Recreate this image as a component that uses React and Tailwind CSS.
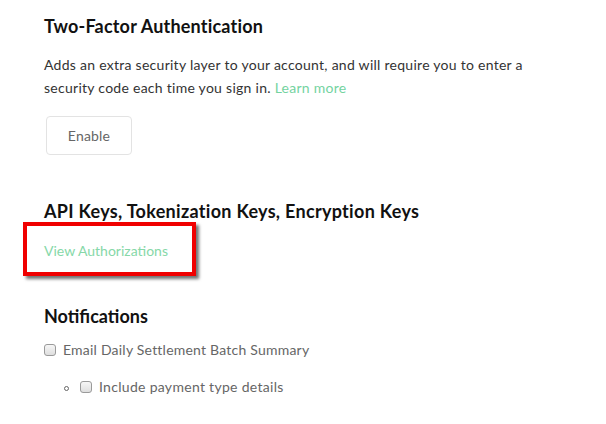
import React from "react";

function Checkbox() {
  return (
    <span className="inline-block w-[12px] h-[12px] rounded-[3px] border border-[#9a9a9a] bg-gradient-to-b from-[#f6f6f6] to-[#dedede] shrink-0" />
  );
}

export default function App() {
  return (
    <div
      className="relative w-[606px] h-[424px] bg-white overflow-hidden pl-[44px] pt-[14px] flex flex-col items-start"
      style={{ fontFamily: "Lato, 'Open Sans', sans-serif" }}
    >
      <h2 className="text-[18px] leading-[24px] font-bold text-[#111] tracking-[0.2px]">Two-Factor Authentication</h2>
      <p className="mt-[15px] text-[14px] leading-[23px] text-[#333] w-[520px] tracking-[0.27px]">
        Adds an extra security layer to your account, and will require you to enter a security code each time you sign in.{" "}
        <span className="text-[#74d39f]">Learn more</span>
      </p>
      <button className="mt-[17px] ml-[2px] w-[86px] h-[39px] rounded-[4px] border border-[#e3e3e3] bg-white text-[14px] text-[#666] tracking-[0.2px] flex items-center justify-center">
        Enable
      </button>

      <h2 className="mt-[44px] text-[18px] leading-[24px] font-bold text-[#111] tracking-[0.3px]">
        API Keys, Tokenization Keys, Encryption Keys
      </h2>
      <div className="relative mt-[15px]">
        <span className="text-[14px] leading-[23px] text-[#86d8a8]">View Authorizations</span>
        <div className="absolute left-[-21px] top-[-16px] w-[173px] h-[54px] border-[4px] border-[#f00000] shadow-[3px_3px_3px_rgba(0,0,0,0.55)] pointer-events-none" />
      </div>

      <h2 className="mt-[42px] text-[18px] leading-[24px] font-bold text-[#111]">Notifications</h2>
      <div className="mt-[10px] flex items-center h-[23px]">
        <Checkbox />
        <span className="ml-[7px] text-[14px] leading-[23px] text-[#666] tracking-[0.22px]">Email Daily Settlement Batch Summary</span>
      </div>
      <div className="mt-[14px] flex items-center h-[23px] pl-[20px]">
        <span className="w-[5px] h-[5px] rounded-full border border-[#666] mt-[3px]" />
        <span className="ml-[11px]"><Checkbox /></span>
        <span className="ml-[7px] text-[14px] leading-[23px] text-[#666] tracking-[0.3px]">Include payment type details</span>
      </div>
    </div>
  );
}
